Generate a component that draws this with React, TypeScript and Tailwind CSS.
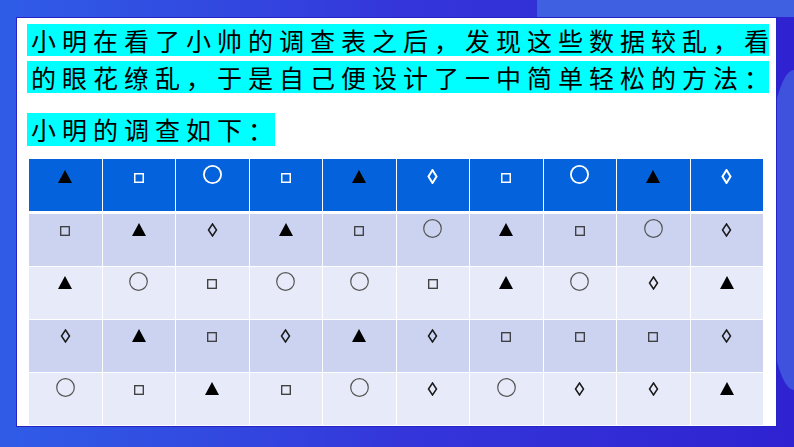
import React from "react"

type Shape = "tri" | "sq" | "cir" | "dia"

const T: Shape = "tri"
const S: Shape = "sq"
const C: Shape = "cir"
const D: Shape = "dia"

const header: Shape[] = [T, S, C, S, T, D, S, C, T, D]
const rows: Shape[][] = [
	[S, T, D, T, S, C, T, S, C, D],
	[T, C, S, C, C, S, T, C, D, T],
	[D, T, S, D, T, D, S, S, S, D],
	[C, S, T, S, C, D, C, D, D, T],
]

// top offsets measured off the picture, body vs header
const bodyMt: Record<Shape, string> = {
	tri: "mt-[9px]",
	sq: "mt-[12px]",
	cir: "mt-[5px]",
	dia: "mt-[9px]",
}
const headMt: Record<Shape, string> = {
	tri: "mt-[11px]",
	sq: "mt-[14px]",
	cir: "mt-[6px]",
	dia: "mt-[10px]",
}

function Symbol({ shape, head }: { shape: Shape; head?: boolean }) {
	const mt = head ? headMt[shape] : bodyMt[shape]
	const line = head ? "#ffffff" : "#1a1a1a"
	if (shape === "tri")
		return (
			<svg className={mt} width="14" height="13" viewBox="0 0 14 13">
				<polygon points="7,0 14,13 0,13" fill="#000" />
			</svg>
		)
	if (shape === "sq")
		return (
			<svg className={mt} width="10" height="10" viewBox="0 0 10 10">
				<rect
					x="0.7"
					y="0.7"
					width="8.6"
					height="8.6"
					fill="none"
					stroke={head ? "#fff" : "#3a3a3a"}
					strokeWidth={head ? 1.6 : 1.3}
				/>
			</svg>
		)
	if (shape === "cir")
		return (
			<svg className={mt} width="19" height="19" viewBox="0 0 19 19">
				<circle
					cx="9.5"
					cy="9.5"
					r={head ? 8.6 : 8.8}
					fill="none"
					stroke={head ? "#fff" : "#555"}
					strokeWidth={head ? 1.8 : 1.2}
				/>
			</svg>
		)
	return (
		<svg
			className={mt}
			width="11"
			height={head ? 15 : 14}
			viewBox={head ? "0 0 11 15" : "0 0 11 14"}
		>
			<polygon
				points={head ? "5.5,1 9.5,7.5 5.5,14 1.5,7.5" : "5.5,1 9.5,7 5.5,13 1.5,7"}
				fill="none"
				stroke={line}
				strokeWidth={head ? 2 : 1.5}
				strokeLinejoin="miter"
			/>
		</svg>
	)
}

export default function App() {
	return (
		<div className="relative w-[794px] h-[447px] overflow-hidden bg-gradient-to-r from-[#2f5ce7] via-[#3436da] to-[#2f22d1]">
			{/* background decoration */}
			<div className="absolute right-0 top-0 w-[257px] h-[17px] bg-[#4060e2]" />
			<div className="absolute left-0 top-0 w-[16px] h-[80px] bg-[#2e5ce7]" />
			<div className="absolute right-[-30px] top-[70px] w-[60px] h-[320px] rounded-[50%] bg-[#3f52de]" />

			<div className="relative pt-[17px] pl-[16px]">
				<div
					className="w-[761px] h-[410px] bg-white border border-[#2323c8] pl-[10px] pt-[6px]"
					style={{ fontFamily: '"Noto Sans CJK SC", "Noto Sans", sans-serif' }}
				>
					<div className="w-[742px] h-[32px] bg-[#00ffff] text-[25px] leading-[32px] tracking-[6px] pl-[4px] whitespace-nowrap text-black">
						小明在看了小帅的调查表之后，发现这些数据较乱，看
					</div>
					<div className="mt-[5px] w-[742px] h-[32px] bg-[#00ffff] text-[25px] leading-[32px] tracking-[6px] pl-[4px] whitespace-nowrap text-black">
						的眼花缭乱，于是自己便设计了一中简单轻松的方法：
					</div>
					<div className="mt-[20px] w-[248px] h-[33px] bg-[#00ffff] text-[25px] leading-[33px] tracking-[6px] pl-[4px] whitespace-nowrap text-black">
						小明的调查如下：
					</div>

					<div className="mt-[13px] ml-[2px] w-[734px]">
						<div className="grid grid-cols-10 gap-x-px h-[52px]">
							{header.map((s, i) => (
								<div key={i} className="flex justify-center items-start bg-[#0463dc]">
									<Symbol shape={s} head />
								</div>
							))}
						</div>
						{rows.map((r, ri) => (
							<div
								key={ri}
								className={
									"grid grid-cols-10 gap-x-px h-[52px] " +
									(ri === 0 ? "mt-[3px]" : "mt-px")
								}
							>
								{r.map((s, i) => (
									<div
										key={i}
										className={
											"flex justify-center items-start " +
											(ri % 2 === 0 ? "bg-[#cbd3f1]" : "bg-[#e7eaf8]")
										}
									>
										<Symbol shape={s} />
									</div>
								))}
							</div>
						))}
					</div>
				</div>
			</div>
		</div>
	)
}
